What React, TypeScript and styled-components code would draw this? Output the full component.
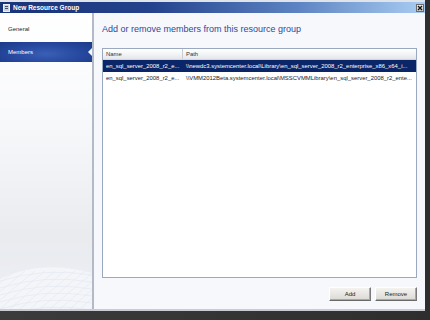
import React from 'react';
import styled, { createGlobalStyle } from 'styled-components';

const GlobalStyle = createGlobalStyle`
  html, body {
    margin: 0;
    padding: 0;
    background: #3b3b3b;
  }
  * {
    box-sizing: border-box;
  }
`;

const Screen = styled.div`
  width: 430px;
  height: 320px;
  background: linear-gradient(90deg, #3b3b3b 0%, #2e2e2e 100%);
  overflow: hidden;
  font-family: 'Liberation Sans', Arial, sans-serif;
`;

const Dialog = styled.div`
  width: 425px;
  height: 311px;
  display: flex;
  flex-direction: column;
  background: #f6f7fb;
  border-top: 2px solid #dfe3ea;
  border-bottom: 2px solid #c9ccd2;
`;

const TitleBar = styled.div`
  height: 11px;
  flex-shrink: 0;
  display: flex;
  align-items: center;
  gap: 3px;
  padding: 0 1px 0 3px;
  background: linear-gradient(90deg, #1a3478 0%, #23418c 35%, #5d84c2 70%, #a9cdf2 100%);
`;

const Title = styled.span`
  flex: 1;
  color: #ffffff;
  font-size: 6.5px;
  font-weight: 700;
  line-height: 11px;
  white-space: nowrap;
`;

const CloseButton = styled.div`
  width: 8px;
  height: 8px;
  display: flex;
  align-items: center;
  justify-content: center;
  background: linear-gradient(#f2f2f2, #c8c8c8);
  border: 1px solid #6b6b6b;
`;

const Body = styled.div`
  flex: 1;
  display: flex;
  min-height: 0;
`;

const Nav = styled.div`
  width: 94px;
  flex-shrink: 0;
  display: flex;
  flex-direction: column;
  padding-top: 6px;
  gap: 3px;
  border-right: 2px solid #b3bac7;
  background: linear-gradient(180deg, #ffffff 0%, #f8f9fb 35%, #e9ebef 75%, #eceff4 100%);
  overflow: hidden;
`;

const NavItem = styled.div<{ $active?: boolean }>`
  position: relative;
  height: 20px;
  display: flex;
  align-items: center;
  padding-left: 8px;
  font-size: 6px;
  color: ${(p) => (p.$active ? '#ffffff' : '#1e1e1e')};
  background: ${(p) =>
    p.$active
      ? 'radial-gradient(ellipse at 50% 60%, #3a5fb6 0%, #26489e 55%, #1c3a88 100%)'
      : 'transparent'};
`;

const Notch = styled.span`
  position: absolute;
  right: 0;
  top: 6px;
  width: 0;
  height: 0;
  border-top: 4px solid transparent;
  border-bottom: 4px solid transparent;
  border-right: 4px solid #f6f7fb;
`;

const NavArt = styled.svg`
  margin-top: auto;
  display: block;
`;

const Content = styled.div`
  flex: 1;
  display: flex;
  flex-direction: column;
  padding: 10px 8px 8px 8px;
  background: #f7f8fc;
`;

const Heading = styled.div`
  font-size: 9px;
  line-height: 13px;
  color: #2a4a9c;
  margin-bottom: 12px;
  white-space: nowrap;
`;

const Table = styled.div`
  height: 230px;
  display: flex;
  flex-direction: column;
  border: 1px solid #9aa8c0;
  background: #ffffff;
`;

const Row = styled.div<{ $selected?: boolean }>`
  height: 12px;
  display: grid;
  grid-template-columns: 80px 1fr;
  align-items: center;
  background: ${(p) => (p.$selected ? '#0b2668' : 'transparent')};
  color: ${(p) => (p.$selected ? '#ffffff' : '#222222')};
`;

const HeaderRow = styled(Row)`
  height: 11px;
  background: linear-gradient(#ffffff 0%, #f3f4f6 50%, #e4e6ea 100%);
  border-bottom: 1px solid #d3d6dc;
  color: #333333;
`;

const Cell = styled.div<{ $divider?: boolean }>`
  height: 100%;
  display: flex;
  align-items: center;
  padding-left: 3px;
  font-size: 5.9px;
  white-space: nowrap;
  overflow: hidden;
  min-width: 0;
  border-right: ${(p) => (p.$divider ? '1px solid #c9cdd5' : 'none')};
`;

const Buttons = styled.div`
  margin-top: auto;
  display: flex;
  justify-content: flex-end;
  gap: 4px;
`;

const Button = styled.button`
  width: 42px;
  height: 14px;
  padding: 0;
  font-family: 'Liberation Sans', Arial, sans-serif;
  font-size: 6px;
  color: #222222;
  background: linear-gradient(#f4f3f0, #dcdad5);
  border: 1px solid;
  border-color: #ffffff #7a7a7a #6a6a6a #ffffff;
  box-shadow: inset -1px -1px 0 #a8a8a8;
`;

const rows = [
  {
    name: 'en_sql_server_2008_r2_e...',
    path: '\\\\newdc3.systemcenter.local\\Library\\en_sql_server_2008_r2_enterprise_x86_x64_i...',
    selected: true,
  },
  {
    name: 'en_sql_server_2008_r2_e...',
    path: '\\\\VMM2012Beta.systemcenter.local\\MSSCVMMLibrary\\en_sql_server_2008_r2_ente...',
    selected: false,
  },
];

function WaveGrid() {
  const lines = [];
  for (let i = 0; i < 14; i++) {
    const x = -30 + i * 10;
    lines.push(
      <path key={`v${i}`} d={`M${x} 70 Q${x + 25} 48 ${x + 45} 32`} />
    );
  }
  for (let j = 0; j < 6; j++) {
    const y = 34 + j * 7;
    lines.push(
      <path key={`h${j}`} d={`M0 ${y + 8} Q45 ${y - 6} 92 ${y + 2}`} />
    );
  }
  return (
    <NavArt width="92" height="70" viewBox="0 0 92 70">
      <path d="M0 40 Q40 20 92 34 L92 70 L0 70 Z" fill="#f3f5f9" />
      <g fill="none" stroke="#e3e8f0" strokeWidth="0.6">
        {lines}
      </g>
    </NavArt>
  );
}

export default function App() {
  return (
    <>
      <GlobalStyle />
      <Screen>
        <Dialog>
          <TitleBar>
            <svg width="7" height="8" viewBox="0 0 7 8">
              <rect x="0.5" y="0.5" width="6" height="7" fill="#c9d2e2" stroke="#eef2f8" />
              <rect x="2" y="2" width="3" height="1" fill="#44506a" />
              <rect x="2" y="4" width="3" height="1" fill="#44506a" />
            </svg>
            <Title>New Resource Group</Title>
            <CloseButton>
              <svg width="6" height="6" viewBox="0 0 6 6">
                <path d="M1 1 L5 5 M5 1 L1 5" stroke="#111111" strokeWidth="1.3" />
              </svg>
            </CloseButton>
          </TitleBar>
          <Body>
            <Nav>
              <NavItem>General</NavItem>
              <NavItem $active>
                Members
                <Notch />
              </NavItem>
              <WaveGrid />
            </Nav>
            <Content>
              <Heading>Add or remove members from this resource group</Heading>
              <Table>
                <HeaderRow>
                  <Cell $divider>Name</Cell>
                  <Cell>Path</Cell>
                </HeaderRow>
                {rows.map((r, i) => (
                  <Row key={i} $selected={r.selected}>
                    <Cell>{r.name}</Cell>
                    <Cell>{r.path}</Cell>
                  </Row>
                ))}
              </Table>
              <Buttons>
                <Button>Add</Button>
                <Button>Remove</Button>
              </Buttons>
            </Content>
          </Body>
        </Dialog>
      </Screen>
    </>
  );
}
